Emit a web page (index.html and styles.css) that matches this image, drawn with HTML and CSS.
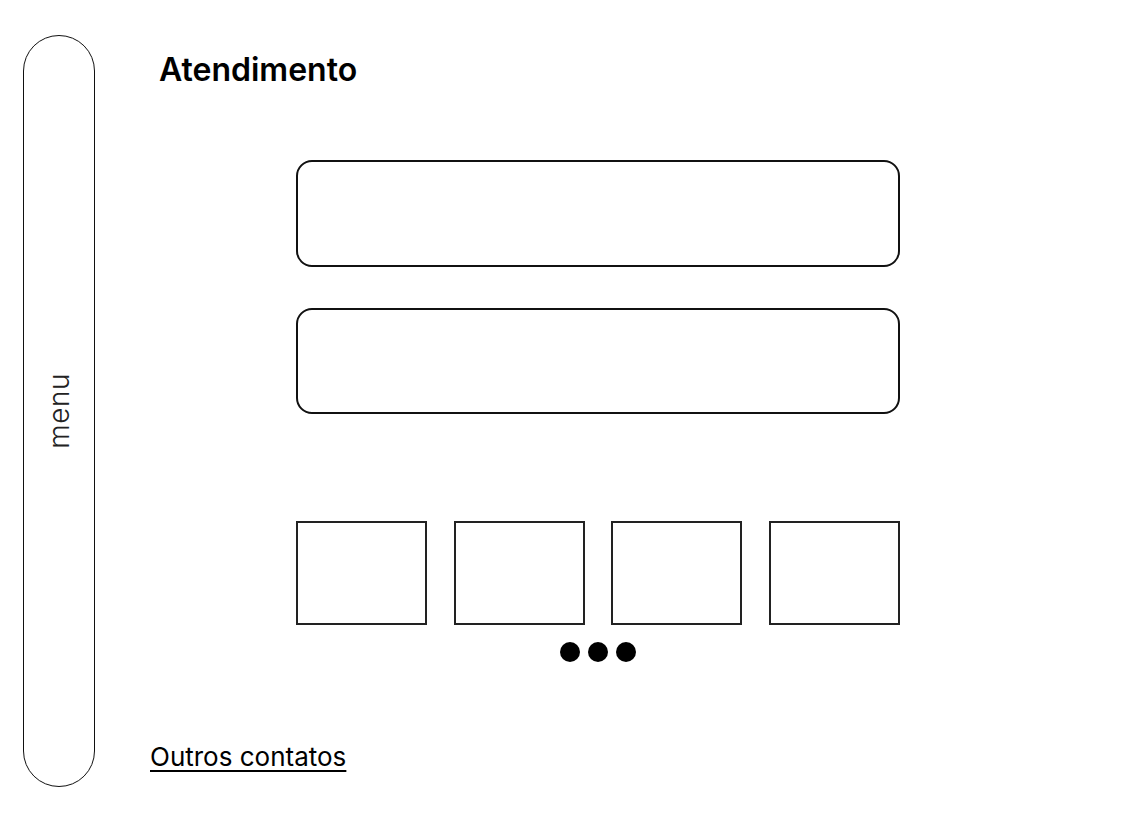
FILE: index.html
```html
<!DOCTYPE html>
<html lang="pt">
<head>
<meta charset="utf-8">
<title>Atendimento</title>
<link rel="stylesheet" href="styles.css">
</head>
<body>
<div class="page">
  <aside class="sidebar"><span class="menu-label">menu</span></aside>
  <main class="main">
    <h1 class="title">Atendimento</h1>
    <div class="content">
      <div class="panel"></div>
      <div class="panel panel-second"></div>
      <div class="tiles">
        <div class="tile"></div>
        <div class="tile"></div>
        <div class="tile"></div>
        <div class="tile"></div>
      </div>
      <div class="dots"><span class="dot"></span><span class="dot"></span><span class="dot"></span></div>
    </div>
    <a class="link" href="#">Outros contatos</a>
  </main>
</div>
</body>
</html>
```

FILE: styles.css
```css
* { box-sizing: border-box; }
html, body { margin: 0; padding: 0; background: #fff; }
body { font-family: Inter, "Noto Sans", sans-serif; color: #000; }
.page {
  display: flex;
  padding: 35px 0 0 23px;
}
.sidebar {
  width: 72px;
  height: 752px;
  border: 1.5px solid #111;
  border-radius: 36px;
  display: flex;
  align-items: center;
  justify-content: center;
  flex-shrink: 0;
}
.menu-label {
  writing-mode: vertical-rl;
  transform: rotate(180deg);
  font-size: 28px;
  font-weight: 300;
  color: #222;
  letter-spacing: 0.5px;
}
.main {
  display: flex;
  flex-direction: column;
  padding-left: 55px;
}
.title {
  margin: 16px 0 0 9px;
  font-size: 32px;
  line-height: 38px;
  font-weight: 600;
}
.content {
  margin-left: 146px;
  width: 604px;
  margin-top: 71px;
  display: flex;
  flex-direction: column;
}
.panel {
  height: 107px;
  border: 2px solid #111;
  border-radius: 16px;
}
.panel-second {
  margin-top: 41px;
  height: 106px;
}
.tiles {
  margin-top: 107px;
  display: flex;
  justify-content: space-between;
}
.tile {
  width: 131px;
  height: 104px;
  border: 2px solid #222;
}
.dots {
  margin-top: 17px;
  display: flex;
  justify-content: center;
  gap: 8px;
}
.dot {
  width: 20px;
  height: 20px;
  border-radius: 50%;
  background: #000;
}
.link {
  margin-top: 80px;
  font-size: 26px;
  line-height: 30px;
  color: #000;
  text-decoration: underline;
  text-underline-offset: 4px;
  text-decoration-thickness: 1.5px;
}
```
